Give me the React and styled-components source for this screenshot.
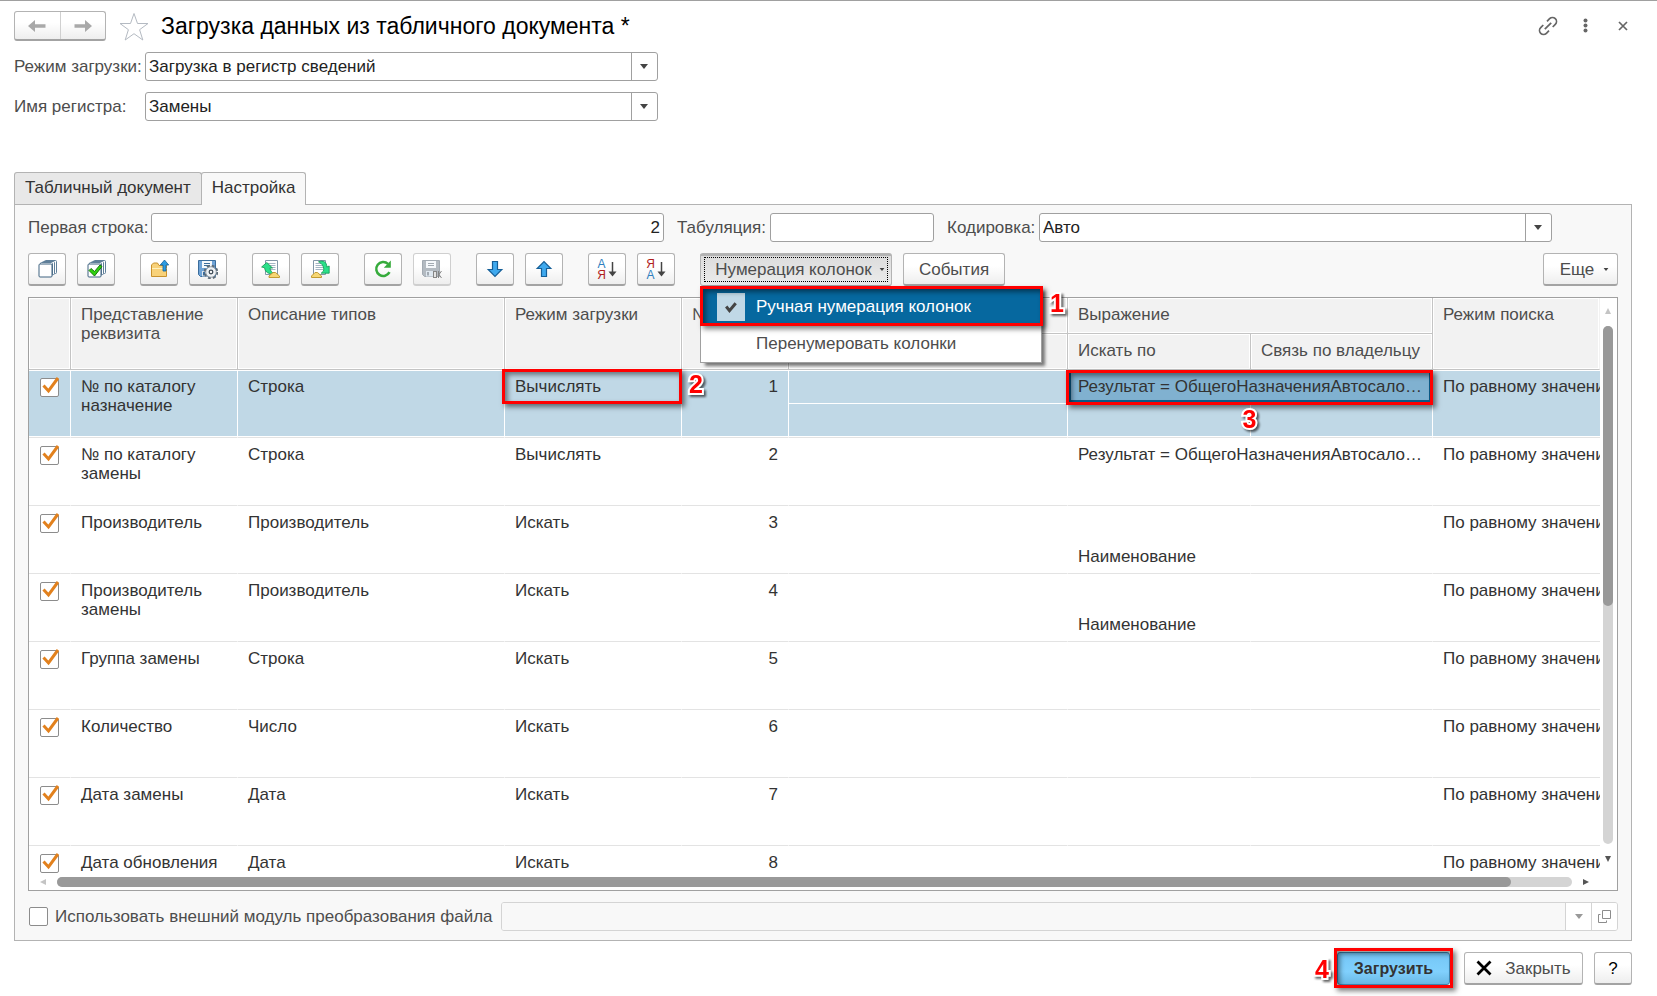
import React, { useState } from "react";
import styled, { createGlobalStyle, css } from "styled-components";

const GlobalStyle = createGlobalStyle`
  *, *::before, *::after { box-sizing: border-box; }
  body {
    margin: 0;
    background: #fff;
    color: #333;
    font: 17px/19px "Liberation Sans", Arial, sans-serif;
  }
  button, input, select { font: inherit; color: inherit; }
`;

/* ---------- window ---------- */

const Window = styled.div`
  display: flex;
  flex-direction: column;
  height: 100vh;
  min-height: 600px;
  padding: 10px 25px 11px 14px;
  border-top: 1px solid #a0a0a0;
`;

const Header = styled.header`
  display: flex;
  align-items: center;
  height: 30px;
`;

const Title = styled.h1`
  flex: 1;
  margin: 0 0 0 12px;
  color: #000;
  font-size: 23px;
  line-height: 28px;
  font-weight: 400;
  white-space: nowrap;
`;

const raised = css`
  border: 1px solid #b3b3b3;
  border-bottom: 2px solid #a3a3a3;
  border-radius: 3px;
  background: linear-gradient(#fff 40%, #eee);
`;

const NavGroup = styled.nav`
  ${raised}
  display: flex;
  width: 92px;
  height: 30px;
`;

const NavButton = styled.button`
  flex: 1;
  display: grid;
  place-items: center;
  padding: 0;
  border: 0;
  background: none;
  & + & { border-left: 1px solid #d0d0d0; }
`;

const FlatButton = styled.button`
  display: grid;
  place-items: center;
  padding: 0;
  border: 0;
  background: none;
`;

const StarButton = styled(FlatButton)`
  margin-left: 13px;
`;

const WindowTools = styled.div`
  display: flex;
  align-items: center;
  gap: 18px;
`;

/* ---------- fields ---------- */

const FieldRow = styled.div`
  display: flex;
  align-items: center;
  margin-top: 11px;
  color: #4d4d4d;
`;

const Label = styled.label`
  flex: none;
  width: ${(p) => p.$width}px;
  white-space: nowrap;
`;

const fieldBox = css`
  height: 29px;
  border: 1px solid #a0a0a0;
  border-radius: 3px;
  background: #fff;
  color: #222;
`;

const TextInput = styled.input`
  ${fieldBox}
  flex: 0 1 ${(p) => p.$width}px;
  min-width: 60px;
  margin-right: 13px;
  padding: 0 3px;
  text-align: ${(p) => (p.$right ? "right" : "left")};
`;

const ComboBox = styled.div`
  ${fieldBox}
  display: flex;
  flex: 0 1 513px;
  min-width: 120px;
  overflow: hidden;
`;

const Select = styled.select`
  flex: 1;
  min-width: 0;
  padding: 0 3px;
  border: 0;
  background: none;
  appearance: none;
`;

const ComboArrow = styled.span`
  display: grid;
  place-items: center;
  width: 26px;
  padding-right: 1px;
  border-left: 1px solid #a0a0a0;
`;

/* ---------- tabs and panel ---------- */

const Tabs = styled.div`
  display: flex;
  margin-top: 51px;
`;

const Tab = styled.button`
  height: 32px;
  padding: 0 10px 2px;
  border: 1px solid #b3b3b3;
  border-bottom: 0;
  border-radius: 3px 3px 0 0;
  background: #e8e8e8;
  color: #333;
  ${(p) =>
    p.$active &&
    css`
      z-index: 1;
      height: 33px;
      margin: 0 0 -1px -1px;
      padding-bottom: 3px;
      background: #f8f8f8;
    `}
`;

const Panel = styled.section`
  display: flex;
  flex: 1;
  flex-direction: column;
  min-height: 0;
  padding: 8px 13px 9px;
  border: 1px solid #b3b3b3;
  background: #f8f8f8;
`;

const PanelFields = styled(FieldRow)`
  margin-top: 0;
`;

/* ---------- toolbar ---------- */

const Toolbar = styled.div`
  display: flex;
  gap: 25px;
  margin: 11px 0;
`;

const ToolGroup = styled.div`
  display: flex;
  gap: 11px;
`;

const ButtonBase = styled.button`
  ${raised}
  display: flex;
  align-items: center;
  justify-content: center;
  height: 33px;
  padding: 0;
  color: #4d4d4d;
  white-space: nowrap;
`;

const IconButton = styled(ButtonBase)`
  width: 38px;
  gap: 2px;
  &:disabled { border-color: #cfcfcf; }
`;

const TextButton = styled(ButtonBase)`
  width: ${(p) => p.$width}px;
  gap: ${(p) => p.$gap || 9}px;
  padding-left: ${(p) => p.$inset || 0}px;
`;

const PressedButton = styled(TextButton)`
  padding-bottom: 3px;
  border-top: 3px solid #b3b3b3;
  border-bottom-width: 1px;
  background: linear-gradient(#dcdcdc, #ececec);
  outline: 1px dotted #000;
  outline-offset: -5px;
`;

const MoreGroup = styled(ToolGroup)`
  margin-left: auto;
`;

const Letters = styled.span`
  display: flex;
  flex-direction: column;
  font-size: 12px;
  line-height: 11px;
  padding-top: 1px;
  color: ${(p) => (p.$swap ? "#b01e1e" : "#2f7fc0")};
  span:last-child { color: ${(p) => (p.$swap ? "#2f7fc0" : "#b01e1e")}; }
`;

const MenuAnchor = styled.div`
  position: relative;
`;

const Menu = styled.ul`
  position: absolute;
  z-index: 10;
  top: 100%;
  left: 0;
  width: 342px;
  margin: 0;
  padding: 1px 0 0;
  border: 1px solid #a0a0a0;
  background: #fff;
  box-shadow: 4px 4px 3px -1px rgba(0, 0, 0, 0.5);
  list-style: none;
`;

const MenuItem = styled.li`
  position: relative;
`;

const MenuButton = styled.button`
  display: flex;
  align-items: center;
  gap: 11px;
  width: 100%;
  height: 37px;
  padding: 0 16px;
  border: 0;
  background: ${(p) => (p.$active ? "#06689f" : "#fff")};
  color: ${(p) => (p.$active ? "#fff" : "#4d4d4d")};
`;

const MenuMark = styled.span`
  display: grid;
  place-items: center;
  width: 28px;
  height: 28px;
  background: ${(p) => (p.$on ? "#c0d8e6" : "none")};
`;

/* ---------- numbered call-outs ---------- */

const Frame = styled.span`
  position: absolute;
  z-index: 3;
  inset: ${(p) => p.$inset};
  border: 3px solid #f00;
  box-shadow: 3px 3px 5px rgba(0, 0, 0, 0.5), inset 3px 3px 5px rgba(0, 0, 0, 0.45);
  pointer-events: none;
`;

const Callout = styled.span`
  position: absolute;
  z-index: 4;
  color: #f00;
  font-size: 25px;
  font-weight: 700;
  line-height: 26px;
  paint-order: stroke fill;
  -webkit-text-stroke: 4px #fff;
  filter: drop-shadow(2px 2px 1px rgba(0, 0, 0, 0.6));
  pointer-events: none;
  ${(p) => p.$side === "right" && "left: 100%; top: 50%; margin: -16px 0 0 10px;"}
  ${(p) => p.$side === "left" && "right: 100%; top: 50%; margin: -12px 8px 0 0;"}
  ${(p) => p.$side === "bottom" && "left: 50%; top: 100%; margin: 4px 0 0 -7px;"}
`;

/* ---------- table ---------- */

const GridFrame = styled.div`
  display: grid;
  flex: 1;
  grid-template-columns: minmax(0, 1fr) 17px;
  grid-template-rows: minmax(0, 1fr) 17px;
  min-height: 0;
  border: 1px solid #a0a0a0;
  background: #fff;
`;

const GridViewport = styled.div`
  min-height: 0;
  overflow: hidden;
`;

const Table = styled.table`
  width: 100%;
  min-width: 1500px;
  table-layout: fixed;
  border-collapse: separate;
  border-spacing: 0;
`;

const Th = styled.th`
  height: 36px;
  padding: 7px 0 0 10px;
  border-right: 1px solid #c4c4c4;
  border-bottom: 1px solid #c4c4c4;
  background: #f2f2f2;
  box-shadow: inset 0 0 0 1px #fff;
  color: #4d4d4d;
  font-weight: 400;
  text-align: left;
  vertical-align: top;
  white-space: ${(p) => (p.$wrap ? "normal" : "nowrap")};
  &:last-child { border-right-color: ${(p) => (p.$edge ? "transparent" : "#c4c4c4")}; }
`;

const Td = styled.td`
  position: relative;
  height: 34px;
  padding: 7px 0 0 10px;
  border-right: ${(p) => (p.$edge ? 0 : 1)}px solid #fff;
  border-bottom: 1px solid ${(p) => (p.$inner ? "#fff" : "#e3e3e3")};
  background: ${(p) => (p.$current ? "#80b1d0" : p.$selected ? "#c0d8e6" : "#fff")};
  box-shadow: ${(p) =>
    p.$current
      ? "inset 0 0 0 3px #0a5c8a"
      : p.$inner
      ? "inset 0 1px #fff"
      : p.$half
      ? "inset 0 -1px #fff"
      : "inset 0 1px #fff, inset 0 -1px #fff"};
  vertical-align: top;
`;

const NumberTd = styled(Td)`
  padding-right: 10px;
  text-align: right;
`;

const CheckTd = styled(Td)`
  padding-top: 8px;
  padding-left: 11px;
`;

const Clip = styled.div`
  overflow: hidden;
  white-space: nowrap;
`;

const TickBox = styled.span`
  display: inline-grid;
  width: 19px;
  height: 19px;
  vertical-align: top;
  svg { grid-area: 1 / 1; margin-top: -2px; pointer-events: none; }
`;

const TickInput = styled.input`
  grid-area: 1 / 1;
  width: 19px;
  height: 19px;
  margin: 0;
  border: 1px solid #8c8c8c;
  border-radius: 2px;
  background: #fff;
  appearance: none;
`;

const VBar = styled.div`
  display: flex;
  flex-direction: column;
  align-items: center;
  grid-row: 1 / 3;
  grid-column: 2;
  padding: 10px 2px 28px 0;
  gap: 12px;
`;

const HBar = styled.div`
  display: flex;
  align-items: center;
  gap: 11px;
  padding: 0 11px 0 11px;
`;

const Track = styled.div`
  flex: 1;
  border-radius: 5px;
  background: #d4d4d4;
  ${(p) => (p.$vertical ? "width: 10px;" : "height: 10px;")}
`;

const Thumb = styled.div`
  border-radius: 5px;
  background: #999;
  ${(p) => (p.$vertical ? "width: 10px; height: 54%;" : "height: 10px; width: 96%;")}
`;

/* ---------- bottom ---------- */

const ModuleRow = styled.div`
  display: flex;
  align-items: center;
  margin-top: 11px;
  color: #4d4d4d;
`;

const ModuleLabel = styled.label`
  display: flex;
  align-items: center;
  gap: 7px;
  margin-right: 8px;
  padding-left: 1px;
  white-space: nowrap;
`;

const ModuleField = styled.div`
  display: flex;
  flex: 1;
  height: 29px;
  border: 1px solid #d4d4d4;
  border-radius: 3px;
  overflow: hidden;
`;

const ModuleInput = styled.input`
  flex: 1;
  min-width: 0;
  border: 0;
  background: #f8f8f8;
`;

const ModuleButton = styled.button`
  display: grid;
  place-items: center;
  width: 26px;
  padding: 0;
  border: 0;
  border-left: 1px solid #d4d4d4;
  background: #fff;
`;

const Footer = styled.footer`
  display: flex;
  justify-content: flex-end;
  gap: 11px;
  margin-top: 11px;
`;

const PrimaryAnchor = styled.div`
  position: relative;
  margin-right: 3px;
`;

const PrimaryButton = styled(TextButton)`
  border: 1px solid #3f87b3;
  background: linear-gradient(#74c6f6, #80d0fd 60%, #6ab8e4);
  color: #333;
  font-size: 16px;
  font-weight: 700;
`;

const HelpButton = styled(IconButton)`
  color: #000;
`;

/* ---------- icons ---------- */

const Svg = ({ w = 20, h = w, box, children }) => (
  <svg width={w} height={h} viewBox={box || `0 0 ${w} ${h}`} fill="none" aria-hidden="true">
    {children}
  </svg>
);

const Caret = ({ color = "#444", w = 8 }) => (
  <Svg w={w} h={w - 3} box="0 0 8 5">
    <path d="M0 0h8L4 5z" fill={color} />
  </Svg>
);

const ScrollArrow = ({ d, color }) => (
  <Svg w={6}>
    <path d={d} fill={color} />
  </Svg>
);

const NavArrow = ({ flip }) => (
  <Svg w={18} h={14}>
    <path
      d="M0 7l7-6v4.200h10.500v3.600H7V13z"
      fill="#a9a9a9"
      transform={flip ? "rotate(180 9 7)" : undefined}
    />
  </Svg>
);

const StarIcon = () => (
  <Svg w={30} h={29}>
    <path d="M15 1.500l3.500 10h10.500l-8.400 6.200L23.800 28 15 21.700 6.200 28l3.200-10.300L1 11.500h10.500z" stroke="#b4bac2" />
  </Svg>
);

const LinkIcon = () => (
  <Svg w={20}>
    <g stroke="#666" strokeWidth="1.700">
      <path d="M6.800 13.200l6.400-6.400" />
      <path d="M9 5.300l2.600-2.600a3.900 3.900 0 0 1 5.700 5.700L14.700 11" />
      <path d="M11 14.700l-2.600 2.600a3.900 3.900 0 0 1-5.700-5.700L5.300 9" />
    </g>
  </Svg>
);

const DotsIcon = () => (
  <Svg w={20}>
    <g fill="#666">
      <circle cx="9.500" cy="4.500" r="2" />
      <circle cx="9.500" cy="9.500" r="2" />
      <circle cx="9.500" cy="14.500" r="2" />
    </g>
  </Svg>
);

const CloseIcon = () => (
  <Svg w={18}>
    <path d="M5 5l8 8M13 5l-8 8" stroke="#666" strokeWidth="1.700" />
  </Svg>
);

const Tick = () => (
  <Svg w={19} h={20}>
    <path d="M3.500 9.500l5 5.500L18 2" stroke="#e2811d" strokeWidth="3" />
  </Svg>
);

const Stack = () => (
  <g fill="#fff" stroke="#5f7f99">
    <rect x="7.500" y="1.500" width="12" height="13" rx="1" />
    <rect x="5.500" y="2.500" width="12" height="13" rx="1" />
    <rect x="3.500" y="3.500" width="12" height="13" rx="1" />
    <rect x="2" y="5" width="13" height="13" rx="1" stroke="#3f6380" />
  </g>
);

const UncheckAllIcon = () => (
  <Svg><Stack /></Svg>
);

const CheckAllIcon = () => (
  <Svg>
    <Stack />
    <path d="M3 11.500l2-2 3.500 3 5.500-6.500 2 1.500L8.500 17z" fill="#2fd10f" stroke="#15780a" />
  </Svg>
);

const FolderIcon = () => (
  <Svg>
    <path d="M2.500 17.500V6l2-2h4l1.500 2.500h7.500v11z" fill="#f8d27a" stroke="#c8922e" />
    <path d="M3 9.500h14.500" stroke="#fff0bd" />
    <path d="M15.500 1l4.200 5h-2.700v6h-3V6h-2.700z" fill="#2d9be0" stroke="#125f9a" strokeWidth=".8" />
  </Svg>
);

const Floppy = ({ frame = "#6fa3d6", edge = "#3b6d9c" }) => (
  <>
    <path d="M.5 1.500h17v16h-15l-2-2z" fill={frame} stroke={edge} />
    <rect x="4" y="2" width="10" height="7" fill="#f5f8fb" />
    <path d="M6 4.500h6M6 6.500h6" stroke={edge} />
    <rect x="4" y="12" width="9" height="5.500" fill="#dfe8f0" />
    <rect x="5" y="13" width="2" height="3.500" fill={edge} />
  </>
);

const SaveSettingsIcon = () => (
  <Svg>
    <Floppy />
    <circle cx="13" cy="13" r="6" stroke="#5c6b78" strokeWidth="2.600" strokeDasharray="2.700 2.012" />
    <circle cx="13" cy="13" r="5.300" fill="#eef1f4" stroke="#7f8c97" strokeWidth=".8" />
    <circle cx="13" cy="13" r="1.800" fill="#fff" stroke="#3f4c58" strokeWidth="1.300" />
  </Svg>
);

const Sheet = ({ x }) => (
  <g transform={`translate(${x} 0)`}>
    <path d="M.5 1.500h12v14H.5z" fill="#fff" stroke="#8296a8" />
    <path d="M2.500 4.500h8M2.500 6.500h8M2.500 8.500h8M2.500 10.500h8" stroke="#a5b5c4" />
  </g>
);

const ReadSettingsIcon = () => (
  <Svg>
    <Sheet x={4} />
    <path d="M.6 8L5.800 3.500 11.500 9H9c.3 2.600 1.500 4.200 3.600 5.200C8.200 15.500 4 13.500 3.600 8.800z" fill="#2be08a" stroke="#129650" strokeWidth=".8" />
    <path d="M8 18.500v-1.500L12 13.500h2.500l4 3.500v1.500z" fill="#f7d774" stroke="#c29b32" />
  </Svg>
);

const WriteSettingsIcon = () => (
  <Svg>
    <Sheet x={3} />
    <path d="M8.500 2.800C13 .8 17 3 16.800 8l2.400-1v7.200h-8l2.300-2.200C14.500 8 12 4.500 8.500 2.800z" fill="#2be08a" stroke="#129650" strokeWidth=".8" />
    <path d="M1.500 18.500v-1.500L5 13.500h2.500l4 3.500v1.500z" fill="#f7d774" stroke="#c29b32" />
  </Svg>
);

const RefreshIcon = () => (
  <Svg>
    <path d="M16.500 13.200A7 7 0 1 1 15 4.800" stroke="#36ab3c" strokeWidth="2.500" />
    <path d="M17.800 1.500v7.200h-7z" fill="#36ab3c" />
  </Svg>
);

const SaveOkIcon = () => (
  <Svg>
    <Floppy frame="#b3bac1" edge="#a2aab2" />
    <g stroke="#858585">
      <rect x="11.500" y="12.500" width="3" height="6" fill="#e4e4e4" />
      <path d="M16.500 12v7M19.500 12l-2.500 3.500 2.500 3.500" />
    </g>
  </Svg>
);

const MoveIcon = ({ up }) => (
  <Svg>
    <path
      d="M7.500 2.500h5v8h4.300L10 17.500l-6.800-7h4.300z"
      fill="#3fa9ee"
      stroke="#155f98"
      strokeWidth="1.200"
      transform={up ? "rotate(180 10 10)" : undefined}
    />
  </Svg>
);

const SortArrow = () => (
  <Svg w={9} h={20}>
    <path d="M4.500 3v12" stroke="#444" strokeWidth="1.500" />
    <path d="M.5 12.500h8l-4 5z" fill="#444" />
  </Svg>
);

const MenuCheck = () => (
  <Svg w={14}>
    <path d="M2.200 6.500l3.300 4.200 6.200-7.500" stroke="#444" strokeWidth="3" />
  </Svg>
);

const CrossIcon = () => (
  <Svg w={16}>
    <path d="M1.500 1.500l13 13M14.500 1.500l-13 13" stroke="#000" strokeWidth="2.800" />
  </Svg>
);

const OpenIcon = () => (
  <Svg w={13}>
    <path d="M4.500.500h8v8h-8z" stroke="#8c8c8c" />
    <path d="M2.500 4.500h-2v8h8v-2" stroke="#8c8c8c" />
  </Svg>
);

/* ---------- data ---------- */

const EXPRESSION = "Результат = ОбщегоНазначенияАвтосало…";

const ROWS = [
  { name: "№ по каталогу назначение", type: "Строка", mode: "Вычислять", expr: EXPRESSION },
  { name: "№ по каталогу замены", type: "Строка", mode: "Вычислять", expr: EXPRESSION },
  { name: "Производитель", type: "Производитель", mode: "Искать", by: "Наименование" },
  { name: "Производитель замены", type: "Производитель", mode: "Искать", by: "Наименование" },
  { name: "Группа замены", type: "Строка", mode: "Искать" },
  { name: "Количество", type: "Число", mode: "Искать" },
  { name: "Дата замены", type: "Дата", mode: "Искать" },
  { name: "Дата обновления", type: "Дата", mode: "Искать" },
];

const COLUMNS = [42, 167, 267, 177, 107, 279, 183, 182];

const TOOL_GROUPS = [
  [["Снять флажки", <UncheckAllIcon />], ["Установить флажки", <CheckAllIcon />]],
  [["Открыть настройку", <FolderIcon />], ["Сохранить настройку", <SaveSettingsIcon />]],
  [["Прочитать", <ReadSettingsIcon />], ["Записать", <WriteSettingsIcon />]],
  [["Обновить", <RefreshIcon />], ["Сохранить", <SaveOkIcon />, true]],
  [["Вниз", <MoveIcon />], ["Вверх", <MoveIcon up />]],
  [
    ["По возрастанию", <><Letters><span>А</span><span>Я</span></Letters><SortArrow /></>],
    ["По убыванию", <><Letters $swap><span>Я</span><span>А</span></Letters><SortArrow /></>],
  ],
];

/* ---------- parts ---------- */

function Combo({ id, value }) {
  return (
    <ComboBox>
      <Select id={id} defaultValue={value}>
        <option>{value}</option>
      </Select>
      <ComboArrow><Caret /></ComboArrow>
    </ComboBox>
  );
}

function CheckMark({ checked, onChange, ...rest }) {
  return (
    <TickBox>
      <TickInput type="checkbox" checked={checked} onChange={onChange} {...rest} />
      {checked && <Tick />}
    </TickBox>
  );
}

function DataRow({ row, index, selected }) {
  const [on, setOn] = useState(true);
  const cell = { $selected: selected, rowSpan: 2 };
  return (
    <>
      <tr>
        <CheckTd {...cell}>
          <CheckMark checked={on} onChange={() => setOn(!on)} aria-label={row.name} />
        </CheckTd>
        <Td {...cell}>{row.name}</Td>
        <Td {...cell}>{row.type}</Td>
        <Td {...cell}>
          {row.mode}
          {selected && <Frame $inset="-1px -1px 33px -3px"><Callout $side="right">2</Callout></Frame>}
        </Td>
        <NumberTd {...cell}>{index + 1}</NumberTd>
        <Td $selected={selected} $inner />
        <Td $selected={selected} $current={selected} $inner colSpan={2}>
          <Clip>{row.expr}</Clip>
          {selected && <Frame $inset="0 -1px -2px -2px"><Callout $side="bottom">3</Callout></Frame>}
        </Td>
        <Td {...cell} $edge><Clip>По равному значению</Clip></Td>
      </tr>
      <tr>
        <Td $selected={selected} $half />
        <Td $selected={selected} $half><Clip>{row.by}</Clip></Td>
        <Td $selected={selected} $half />
      </tr>
    </>
  );
}

export default function App() {
  const [external, setExternal] = useState(false);
  return (
    <Window>
      <GlobalStyle />
      <Header>
        <NavGroup>
          <NavButton aria-label="Назад"><NavArrow /></NavButton>
          <NavButton aria-label="Вперед"><NavArrow flip /></NavButton>
        </NavGroup>
        <StarButton aria-label="В избранное"><StarIcon /></StarButton>
        <Title>Загрузка данных из табличного документа *</Title>
        <WindowTools>
          <FlatButton aria-label="Ссылка"><LinkIcon /></FlatButton>
          <FlatButton aria-label="Меню"><DotsIcon /></FlatButton>
          <FlatButton aria-label="Закрыть окно"><CloseIcon /></FlatButton>
        </WindowTools>
      </Header>

      <FieldRow>
        <Label $width={131} htmlFor="mode">Режим загрузки:</Label>
        <Combo id="mode" value="Загрузка в регистр сведений" />
      </FieldRow>
      <FieldRow>
        <Label $width={131} htmlFor="register">Имя регистра:</Label>
        <Combo id="register" value="Замены" />
      </FieldRow>

      <Tabs role="tablist">
        <Tab role="tab" aria-selected="false">Табличный документ</Tab>
        <Tab role="tab" aria-selected="true" $active>Настройка</Tab>
      </Tabs>
      <Panel>
        <PanelFields>
          <Label $width={123} htmlFor="first">Первая строка:</Label>
          <TextInput id="first" $width={513} $right defaultValue="2" />
          <Label $width={93} htmlFor="tab">Табуляция:</Label>
          <TextInput id="tab" $width={164} />
          <Label $width={92} htmlFor="encoding">Кодировка:</Label>
          <Combo id="encoding" value="Авто" />
        </PanelFields>

        <Toolbar>
          {TOOL_GROUPS.map((group, i) => (
            <ToolGroup key={i}>
              {group.map(([label, icon, disabled]) => (
                <IconButton key={label} aria-label={label} disabled={disabled}>{icon}</IconButton>
              ))}
            </ToolGroup>
          ))}
          <ToolGroup>
            <MenuAnchor>
              <PressedButton $width={192} $inset={8} $gap={7} aria-haspopup="menu" aria-expanded="true">
                Нумерация колонок <Caret w={6} />
              </PressedButton>
              <Menu role="menu">
                <MenuItem role="none">
                  <MenuButton role="menuitemcheckbox" aria-checked="true" $active>
                    <MenuMark $on><MenuCheck /></MenuMark>
                    Ручная нумерация колонок
                  </MenuButton>
                  <Frame $inset="-2px -2px -1px -1px"><Callout $side="right">1</Callout></Frame>
                </MenuItem>
                <MenuItem role="none">
                  <MenuButton role="menuitem"><MenuMark />Перенумеровать колонки</MenuButton>
                </MenuItem>
              </Menu>
            </MenuAnchor>
            <TextButton $width={102}>События</TextButton>
          </ToolGroup>
          <MoreGroup>
            <TextButton $width={75} $inset={8}>Еще <Caret w={6} /></TextButton>
          </MoreGroup>
        </Toolbar>

        <GridFrame>
          <GridViewport>
            <Table>
              <colgroup>
                {COLUMNS.map((w, i) => <col key={i} width={w} />)}
                <col />
              </colgroup>
              <thead>
                <tr>
                  <Th rowSpan={2} />
                  <Th rowSpan={2} $wrap>Представление реквизита</Th>
                  <Th rowSpan={2}>Описание типов</Th>
                  <Th rowSpan={2}>Режим загрузки</Th>
                  <Th rowSpan={2}>№</Th>
                  <Th />
                  <Th colSpan={2}>Выражение</Th>
                  <Th rowSpan={2} $edge>Режим поиска</Th>
                </tr>
                <tr>
                  <Th />
                  <Th>Искать по</Th>
                  <Th>Связь по владельцу</Th>
                </tr>
              </thead>
              <tbody>
                {ROWS.map((row, i) => (
                  <DataRow key={row.name} row={row} index={i} selected={i === 0} />
                ))}
              </tbody>
            </Table>
          </GridViewport>
          <VBar>
            <ScrollArrow d="M3 0l3 6H0z" color="#c4c4c4" />
            <Track $vertical><Thumb $vertical /></Track>
            <ScrollArrow d="M3 6L0 0h6z" color="#555" />
          </VBar>
          <HBar>
            <ScrollArrow d="M0 3l6-3v6z" color="#c4c4c4" />
            <Track><Thumb /></Track>
            <ScrollArrow d="M6 3L0 0v6z" color="#555" />
          </HBar>
        </GridFrame>

        <ModuleRow>
          <ModuleLabel>
            <CheckMark checked={external} onChange={() => setExternal(!external)} />
            Использовать внешний модуль преобразования файла
          </ModuleLabel>
          <ModuleField>
            <ModuleInput aria-label="Внешний модуль" disabled />
            <ModuleButton aria-label="Выбрать" disabled><Caret color="#999" /></ModuleButton>
            <ModuleButton aria-label="Открыть" disabled><OpenIcon /></ModuleButton>
          </ModuleField>
        </ModuleRow>
      </Panel>

      <Footer>
        <PrimaryAnchor>
          <PrimaryButton $width={113}>Загрузить</PrimaryButton>
          <Frame $inset="-4px -3px -3px"><Callout $side="left">4</Callout></Frame>
        </PrimaryAnchor>
        <TextButton $width={119} $gap={13}><CrossIcon />Закрыть</TextButton>
        <HelpButton aria-label="Справка">?</HelpButton>
      </Footer>
    </Window>
  );
}
